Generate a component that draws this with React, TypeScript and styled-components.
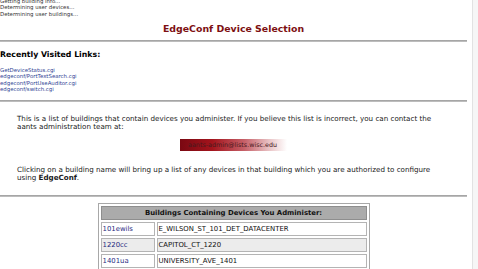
import React from "react";
import styled, { createGlobalStyle } from "styled-components";

const GlobalStyle = createGlobalStyle`
    html, body {
        margin: 0;
        padding: 0;
        background: #ffffff;
        overflow: hidden;
    }
    body {
        font-family: "DejaVu Sans", Verdana, sans-serif;
        color: #111111;
    }
`;

const Page = styled.div`
    display: flex;
    width: 478px;
    height: 269px;
    overflow: hidden;
`;

const Main = styled.main`
    flex: 1;
    padding-right: 5px;
    min-width: 0;
`;

const ScrollTrack = styled.div`
    width: 5px;
    background: #f6f6f6;
    border-left: 1px solid #e2e2e2;
`;

const Status = styled.div`
    margin-top: -2px;
    font-size: 5.4px;
    line-height: 6.3px;
    color: #333333;
`;

const Title = styled.h1`
    margin: 6px 0 0;
    text-align: center;
    font-size: 9.4px;
    line-height: 12px;
    font-weight: bold;
    color: #7d0f12;
`;

const Rule = styled.hr<{ $top: number }>`
    margin: ${(p) => p.$top}px 0 0;
    border: 0;
    height: 2px;
    background: linear-gradient(#9a9a9a, #c8c8c8);
`;

const SectionHeading = styled.h2`
    margin: 8px 0 0;
    font-size: 7.8px;
    line-height: 10px;
    font-weight: bold;
    color: #000000;
`;

const LinkList = styled.div`
    margin-top: 6.8px;
    display: flex;
    flex-direction: column;
`;

const RecentLink = styled.a`
    font-size: 5.4px;
    line-height: 6.4px;
    color: #2f3f94;
    text-decoration: none;
`;

const Paragraph = styled.p<{ $top: number }>`
    margin: ${(p) => p.$top}px 0 0 17px;
    font-size: 7.15px;
    line-height: 8px;
    color: #1a1a1a;
    white-space: nowrap;
`;

const EmailRow = styled.div`
    margin-top: 8px;
    display: flex;
    justify-content: center;
`;

const EmailBox = styled.a`
    display: block;
    width: 107px;
    height: 12px;
    box-sizing: border-box;
    padding-left: 8px;
    font-size: 6.4px;
    line-height: 12px;
    color: #4a1a1e;
    text-decoration: none;
    background: linear-gradient(to right, #7a0812 0%, #a3141c 30%, #c66068 60%, #ebc9cb 85%, #ffffff 100%);
`;

const TableWrap = styled.div`
    margin-top: 6px;
    display: flex;
    justify-content: center;
`;

const BuildingTable = styled.table`
    width: 272px;
    border: 1px solid #a8a8a8;
    border-collapse: separate;
    border-spacing: 2px;
    font-size: 6.9px;
`;

const HeadCell = styled.th`
    height: 12px;
    padding: 0;
    background: #ababab;
    border: 1px solid #8e8e8e;
    font-weight: bold;
    color: #111111;
    text-align: center;
`;

const Cell = styled.td<{ $shaded?: boolean; $first?: boolean }>`
    height: 12px;
    padding: 0 1px;
    width: ${(p) => (p.$first ? "50px" : "auto")};
    background: ${(p) => (p.$shaded ? "#ececec" : "#ffffff")};
    border: 1px solid #b4b4b4;
    color: #111111;
    white-space: nowrap;
`;

const BuildingLink = styled.a`
    color: #1f2a80;
    text-decoration: none;
`;

const buildings = [
    { code: "101ewils", name: "E_WILSON_ST_101_DET_DATACENTER" },
    { code: "1220cc", name: "CAPITOL_CT_1220" },
    { code: "1401ua", name: "UNIVERSITY_AVE_1401" },
    { code: "1410ed", name: "ENGINEERING_DRIVE_1410" },
];

export default function App() {
    return (
        <>
            <GlobalStyle />
            <Page>
                <Main>
                    <Status>
                        <div>Getting building info...</div>
                        <div>Determining user devices...</div>
                        <div>Determining user buildings...</div>
                    </Status>
                    <Title>EdgeConf Device Selection</Title>
                    <Rule $top={5} />
                    <SectionHeading>Recently Visited Links:</SectionHeading>
                    <LinkList>
                        <RecentLink href="#">GetDeviceStatus.cgi</RecentLink>
                        <RecentLink href="#">edgeconf/PortTextSearch.cgi</RecentLink>
                        <RecentLink href="#">edgeconf/PortUseAuditor.cgi</RecentLink>
                        <RecentLink href="#">edgeconf/switch.cgi</RecentLink>
                    </LinkList>
                    <Rule $top={7.6} />
                    <Paragraph $top={13}>
                        This is a list of buildings that contain devices you administer. If you believe this list is incorrect, you can contact the
                        <br />
                        aants administration team at:
                    </Paragraph>
                    <EmailRow>
                        <EmailBox href="#">aants-admin@lists.wisc.edu</EmailBox>
                    </EmailRow>
                    <Paragraph $top={15}>
                        Clicking on a building name will bring up a list of any devices in that building which you are authorized to configure
                        <br />
                        using <b>EdgeConf</b>.
                    </Paragraph>
                    <Rule $top={13} />
                    <TableWrap>
                        <BuildingTable>
                            <thead>
                                <tr>
                                    <HeadCell colSpan={2}>Buildings Containing Devices You Administer:</HeadCell>
                                </tr>
                            </thead>
                            <tbody>
                                {buildings.map((b, i) => (
                                    <tr key={b.code}>
                                        <Cell $first $shaded={i % 2 === 1}>
                                            <BuildingLink href="#">{b.code}</BuildingLink>
                                        </Cell>
                                        <Cell $shaded={i % 2 === 1}>{b.name}</Cell>
                                    </tr>
                                ))}
                            </tbody>
                        </BuildingTable>
                    </TableWrap>
                </Main>
                <ScrollTrack />
            </Page>
        </>
    );
}
